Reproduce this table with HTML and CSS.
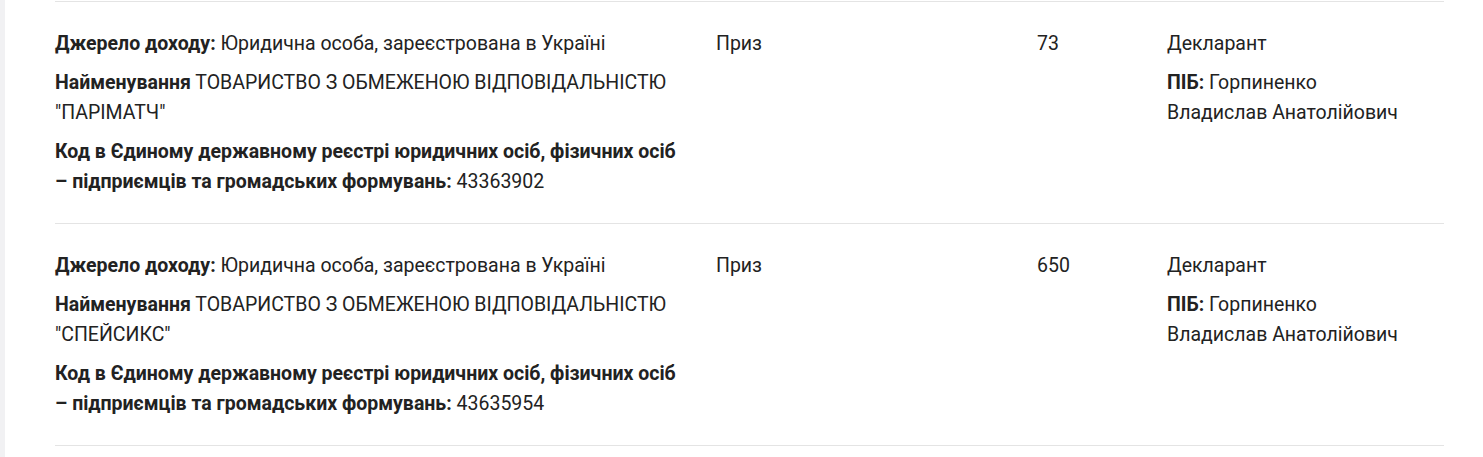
FILE: index.html
```html
<!DOCTYPE html>
<html lang="uk">
<head>
<meta charset="utf-8">
<link rel="stylesheet" href="styles.css">
</head>
<body>
<div class="page">
  <div class="side"></div>
  <div class="content">
    <div class="row">
      <div class="cell c1">
        <p><b>Джерело доходу:</b> Юридична особа, зареєстрована в Україні</p>
        <p><b>Найменування</b> ТОВАРИСТВО З ОБМЕЖЕНОЮ ВІДПОВІДАЛЬНІСТЮ "ПАРІМАТЧ"</p>
        <p><b>Код в Єдиному державному реєстрі юридичних осіб, фізичних осіб – підприємців та громадських формувань:</b> 43363902</p>
      </div>
      <div class="cell c2"><p>Приз</p></div>
      <div class="cell c3"><p>73</p></div>
      <div class="cell c4">
        <p>Декларант</p>
        <p><b>ПІБ:</b> Горпиненко Владислав Анатолійович</p>
      </div>
    </div>
    <div class="row">
      <div class="cell c1">
        <p><b>Джерело доходу:</b> Юридична особа, зареєстрована в Україні</p>
        <p><b>Найменування</b> ТОВАРИСТВО З ОБМЕЖЕНОЮ ВІДПОВІДАЛЬНІСТЮ "СПЕЙСИКС"</p>
        <p><b>Код в Єдиному державному реєстрі юридичних осіб, фізичних осіб – підприємців та громадських формувань:</b> 43635954</p>
      </div>
      <div class="cell c2"><p>Приз</p></div>
      <div class="cell c3"><p>650</p></div>
      <div class="cell c4">
        <p>Декларант</p>
        <p><b>ПІБ:</b> Горпиненко Владислав Анатолійович</p>
      </div>
    </div>
  </div>
</div>
</body>
</html>
```

FILE: styles.css
```css
html, body {
  margin: 0;
  padding: 0;
  background: #ffffff;
}
body {
  font-family: Roboto, "Noto Sans", sans-serif;
  font-size: 19.5px;
  line-height: 30px;
  color: #222222;
}
.page {
  display: flex;
  min-height: 457px;
}
.side {
  width: 5px;
  flex: none;
  background: #f1f1f3;
}
.content {
  padding-left: 50px;
  padding-right: 39px;
  flex: 1;
}
.row {
  display: grid;
  grid-template-columns: 661px 321px 130px 1fr;
  border-top: 1px solid #e4e4e4;
  padding: 27px 0 26px;
}
.row:first-child {
  margin-top: 1px;
}
.row:last-child {
  border-bottom: 1px solid #e4e4e4;
}
.cell p {
  margin: 0 0 9px;
}
.cell p:last-child {
  margin-bottom: 0;
}
.c1 {
  padding-right: 30px;
}
.c4 {
  padding-right: 35px;
}
b {
  font-weight: 700;
}
```
